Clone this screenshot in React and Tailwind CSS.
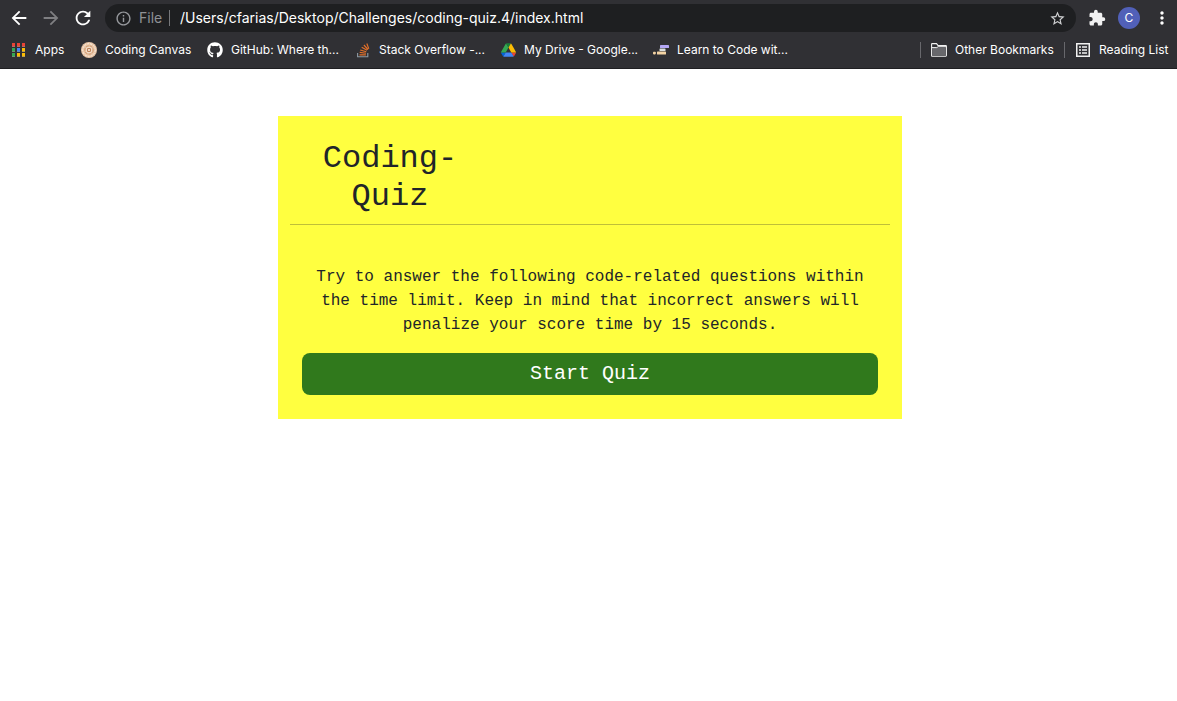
import React from "react";
import { MdArrowBack, MdArrowForward, MdRefresh, MdInfoOutline, MdStarBorder, MdExtension, MdMoreVert } from "react-icons/md";
import { FaGithub } from "react-icons/fa";

function AppsIcon() {
  const colors = ["#ea4335", "#ea4335", "#ea4335", "#34a853", "#4285f4", "#fbbc04", "#34a853", "#fbbc04", "#fbbc04"];
  return (
    <svg width="14" height="15" viewBox="0 0 14 15" aria-hidden="true">
      {colors.map((c, i) => (
        <g key={i}>
          <rect x={(i % 3) * 5} y={Math.floor(i / 3) * 5} width="3" height="4" fill={c} />
          <rect x={(i % 3) * 5} y={Math.floor(i / 3) * 5 + 3} width="3" height="1" fill="#8d8a86" opacity="0.6" />
        </g>
      ))}
    </svg>
  );
}

function CanvasIcon() {
  return (
    <svg width="16" height="16" viewBox="0 0 16 16" aria-hidden="true">
      <circle cx="8" cy="8" r="8" fill="#e9c5a6" />
      <circle cx="8" cy="8" r="6.3" fill="none" stroke="#faeee2" strokeWidth="1" strokeDasharray="2 1" />
      <circle cx="8" cy="8" r="4.2" fill="none" stroke="#c9946b" strokeWidth="0.9" strokeDasharray="3 1" />
      <circle cx="8" cy="8" r="3" fill="#f8e9dc" />
      <circle cx="8" cy="8" r="1.7" fill="none" stroke="#bd8055" strokeWidth="1.2" />
    </svg>
  );
}

function StackIcon() {
  return (
    <svg width="13" height="15" viewBox="0 0 13 15" fill="none" aria-hidden="true">
      <path d="M.6 10v3.8h10.2V10" stroke="#8f9aa3" strokeWidth="1.1" />
      <path d="M2.5 11.8h6.4M2.7 9.4l6.3.8M3.2 7l6.1 1.8M4.7 4.3l5.4 3M6.9 2l4.1 4.5M9.8.5l2 5.2" stroke="#e2702a" strokeWidth="1.15" />
    </svg>
  );
}

function DriveIcon() {
  return (
    <svg width="15" height="14" viewBox="0 0 87.3 78" aria-hidden="true">
      <path d="m6.6 66.85 3.85 6.65c.8 1.4 1.95 2.5 3.3 3.3l13.75-23.8h-27.5c0 1.55.4 3.1 1.2 4.5z" fill="#0066da" />
      <path d="m43.65 25-13.75-23.8c-1.35.8-2.5 1.9-3.3 3.3l-25.4 44a9.06 9.06 0 0 0 -1.2 4.5h27.5z" fill="#34a853" />
      <path d="m73.55 76.8c1.35-.8 2.5-1.9 3.3-3.3l1.6-2.75 7.65-13.25c.8-1.4 1.2-2.95 1.2-4.5h-27.5l5.85 11.5z" fill="#ea4335" />
      <path d="m43.65 25 13.75-23.8c-1.35-.8-2.9-1.2-4.5-1.2h-18.5c-1.6 0-3.15.45-4.5 1.2z" fill="#188038" />
      <path d="m59.8 53h-32.3l-13.75 23.8c1.35.8 2.9 1.2 4.5 1.2h50.8c1.6 0 3.15-.45 4.5-1.2z" fill="#4285f4" />
      <path d="m73.4 26.5-12.7-22c-.8-1.4-1.95-2.5-3.3-3.3l-13.75 23.8 16.15 28h27.45c0-1.55-.4-3.1-1.2-4.5z" fill="#fbbc04" />
    </svg>
  );
}

function LearnIcon() {
  return (
    <svg width="16" height="10" viewBox="0 0 16 10" aria-hidden="true">
      <rect x="7" y="0" width="9" height="3" rx="0.6" fill="#b4a7f5" />
      <rect x="6.5" y="3.5" width="6" height="2.6" rx="0.6" fill="#d9dfe0" />
      <rect x="4" y="6.5" width="9" height="3" rx="0.6" fill="#f3d3a4" />
      <rect x="0" y="6.8" width="2.8" height="2.6" rx="0.8" fill="#f3d3a4" />
    </svg>
  );
}

function FolderIcon() {
  return (
    <svg width="16" height="14" viewBox="0 0 16 14" aria-hidden="true">
      <path d="M.6 12.6V1.2Q.6.6 1.2.6h4.3l1.6 2h7.7q.6 0 .6.6v9.4q0 .6-.6.6H1.2q-.6 0-.6-.6z" fill="#303034" stroke="#f1f1f1" strokeWidth="1.1" />
      <path d="M1.2 4.6h13.6v8H1.2z" fill="#68686c" />
      <path d="M1 4.6h4.8l1.3-.9h8" fill="none" stroke="#f1f1f1" strokeWidth="1" />
    </svg>
  );
}

function ReadingIcon() {
  return (
    <svg width="14" height="14" viewBox="0 0 14 14" aria-hidden="true">
      <rect x="0.75" y="0.75" width="12.5" height="12.5" fill="none" stroke="#f1f1f1" strokeWidth="1.5" />
      <path d="M3 4h2M3 7h2M3 10h2M6 4h5M6 7h5M6 10h5" stroke="#f1f1f1" strokeWidth="1.5" />
    </svg>
  );
}

const bookmarks = [
  { label: "Apps", icon: <AppsIcon />, box: "w-[70px]" },
  { label: "Coding Canvas", icon: <CanvasIcon />, box: "w-[126px]" },
  { label: "GitHub: Where th...", icon: <FaGithub size={16} />, box: "w-[148px]" },
  { label: "Stack Overflow -...", icon: <StackIcon />, box: "w-[145px]" },
  { label: "My Drive - Google...", icon: <DriveIcon />, box: "w-[153px]" },
  { label: "Learn to Code wit...", icon: <LearnIcon />, box: "w-[140px]" },
];

function Bookmark({ label, icon, box }) {
  return (
    <a href="#" className={"flex shrink-0 items-center gap-2 whitespace-nowrap " + box}>
      <span className="flex w-4 shrink-0 justify-center">{icon}</span>
      {label}
    </a>
  );
}

export default function App() {
  return (
    <div className="min-h-screen bg-white">
      <header className="border-b border-[#1f1f22] bg-[#303034] font-['Inter',sans-serif] text-white">
        <div className="flex h-9 items-center pl-2 pr-[5px]">
          <nav className="flex items-center gap-2.5" aria-label="Navigation">
            <button aria-label="Back"><MdArrowBack size={22} /></button>
            <button aria-label="Forward" className="text-[#7f7f82]"><MdArrowForward size={22} /></button>
            <button aria-label="Reload"><MdRefresh size={22} /></button>
          </nav>
          <div className="ml-[11px] flex h-7 min-w-0 flex-1 items-center rounded-full bg-[#1e1f21] px-2.5 text-sm">
            <MdInfoOutline size={17} className="shrink-0 text-[#97999d]" />
            <span className="ml-[7px] w-[30px] text-[#8f9195]">File</span>
            <span className="h-4 w-px shrink-0 bg-[#77787b]" />
            <input
              aria-label="Address"
              defaultValue="/Users/cfarias/Desktop/Challenges/coding-quiz.4/index.html"
              className="ml-2.5 min-w-0 flex-1 bg-transparent outline-none"
            />
            <button aria-label="Bookmark this page" className="text-[#d0d1d3]"><MdStarBorder size={17} /></button>
          </div>
          <button aria-label="Extensions" className="ml-3 text-[#f1f1f1]"><MdExtension size={18} /></button>
          <button aria-label="Profile" className="ml-3 flex size-[22px] items-center justify-center rounded-full bg-[#5160b8] text-xs">C</button>
          <button aria-label="Menu" className="ml-3"><MdMoreVert size={20} /></button>
        </div>
        <nav className="flex h-8 items-center justify-between pb-1 pl-[11px] pr-2 text-xs" aria-label="Bookmarks">
          <div className="flex">
            {bookmarks.map((b) => <Bookmark key={b.label} {...b} />)}
          </div>
          <div className="flex items-center gap-2.5">
            <span className="h-4 w-px bg-[#68686c]" />
            <Bookmark label="Other Bookmarks" icon={<FolderIcon />} box="w-[123px]" />
            <span className="h-4 w-px bg-[#68686c]" />
            <Bookmark label="Reading List" icon={<ReadingIcon />} box="w-[94px]" />
          </div>
        </nav>
      </header>
      <div className="pl-[3px] pt-[47px]">
        <main className="mx-auto max-w-[624px] bg-[#ffff40] p-3 text-center font-['Liberation_Mono',monospace] text-[#212529]">
          <div className="border-b border-[#bfbf39] pt-3 pb-2">
            <h1 className="w-1/3 px-6 text-[32px] leading-[38px]">Coding-Quiz</h1>
          </div>
          <section className="px-3 pb-3 pt-10">
            <p className="mb-4 text-base">
              Try to answer the following code-related questions within the time limit. Keep in mind that incorrect answers will penalize your score time by 15 seconds.
            </p>
            <button className="h-[42px] w-full rounded-lg bg-[#30791c] text-xl text-white">Start Quiz</button>
          </section>
        </main>
      </div>
    </div>
  );
}
